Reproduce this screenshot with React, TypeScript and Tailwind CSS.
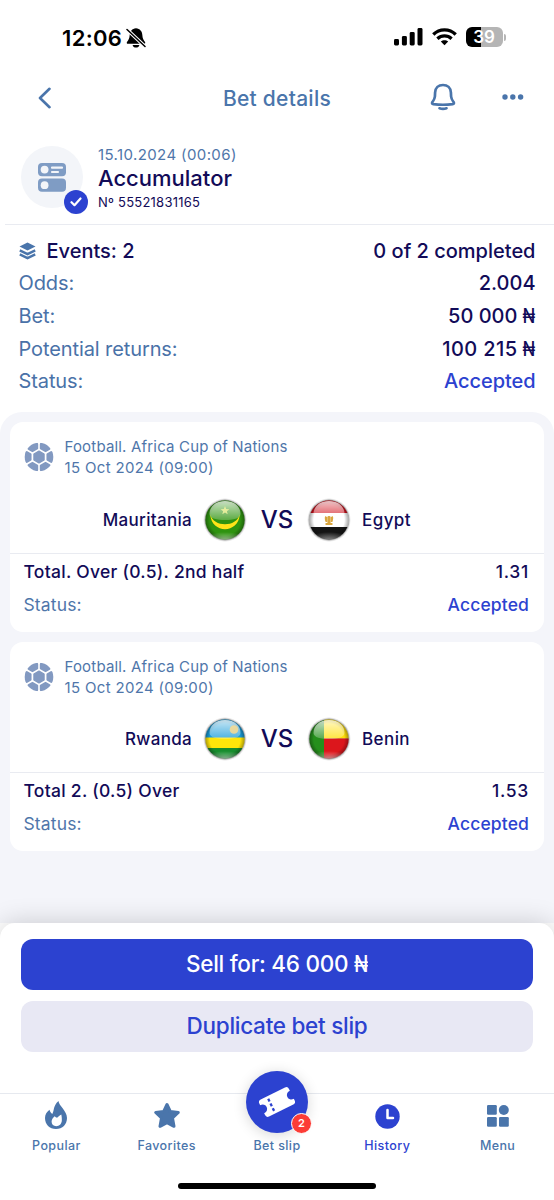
import React from 'react';

const NAVY = 'text-[#120b58]';

function Naira() {
  return <span className="-ml-[0.13em] inline-block origin-right scale-x-[0.83]">₦</span>;
}

function Row({ label, value, accent, money, wide }: { label: string; value: string; accent?: boolean; money?: boolean; wide?: boolean }) {
  return (
    <div className="flex h-[32.6px] items-center justify-between text-[20px] leading-none">
      <span className="tracking-[-0.005em] text-[#4a72a8]">{label}</span>
      <span className={accent ? 'font-medium tracking-[-0.003em] text-[#2c42d0]' : 'font-medium text-[#120b58]'}>
        <span className={wide ? 'tracking-[0.02em]' : ''}>{value}</span>
        {money && <> <Naira /></>}
      </span>
    </div>
  );
}

function Ball() {
  return (
    <svg width="30" height="30" viewBox="-15 -15 30 30" className="shrink-0">
      <circle r="14.3" fill="#8299c1" />
      <g stroke="#fff" strokeWidth="1.6">
        <path d="M0 -15V15M-13 -7.5L13 7.5M-13 7.5L13 -7.5" />
      </g>
      <path d="M0 -8.600L7.450 -4.300V4.300L0 8.600L-7.450 4.300V-4.300Z" fill="#fff" />
      <path d="M0 -5.9L5.1 -2.950V2.950L0 5.900L-5.100 2.950V-2.950Z" fill="#8299c1" stroke="#8299c1" strokeWidth="1.200" strokeLinejoin="round" />
      <g fill="#fff">
        <path d="M-2.200 -15H2.200L0 -12.600ZM-2.200 15H2.200L0 12.600Z" />
        <path d="M-14 -5.500L-11.900 -9L-11 -6.300ZM14 -5.500L11.900 -9L11 -6.300ZM-14 5.500L-11.900 9L-11 6.300ZM14 5.500L11.900 9L11 6.300Z" />
      </g>
    </svg>
  );
}

function Flag({ code }: { code: string }) {
  return (
    <svg width="44" height="44" viewBox="0 0 44 44" className="shrink-0">
      <defs>
        <clipPath id={`c-${code}`}>
          <circle cx="22" cy="22" r="19.6" />
        </clipPath>
        <radialGradient id={`e-${code}`} cx=".5" cy=".5" r=".5">
          <stop offset=".76" stopColor="#000" stopOpacity="0" />
          <stop offset="1" stopColor="#000" stopOpacity=".36" />
        </radialGradient>
        <linearGradient id={`g-${code}`} x1="0" y1="0" x2="0" y2="1">
          <stop offset="0" stopColor="#fff" stopOpacity=".75" />
          <stop offset="1" stopColor="#fff" stopOpacity=".22" />
        </linearGradient>
        <radialGradient id={`b-${code}`} cx=".5" cy="1" r=".6">
          <stop offset="0" stopColor="#fff" stopOpacity=".7" />
          <stop offset="1" stopColor="#fff" stopOpacity="0" />
        </radialGradient>
      </defs>
      <circle cx="22" cy="22" r="21.4" fill="#8a8a8a" opacity=".22" />
      <circle cx="22" cy="22" r="20.4" fill="#6f6f6f" opacity=".55" />
      <g clipPath={`url(#c-${code})`}>
        {code === 'mr' && <rect width="44" height="44" fill="#2f9310" />}
        {code === 'eg' && (
          <>
            <rect width="44" height="15" fill="#d0101c" />
            <rect y="15" width="44" height="14" fill="#fff" />
            <rect y="29" width="44" height="15" fill="#141414" />
          </>
        )}
        {code === 'rw' && (
          <>
            <rect width="44" height="21" fill="#189bd8" />
            <rect y="20.500" width="44" height="11" fill="#ffe60a" />
            <rect y="31" width="44" height="13" fill="#178d2e" />
          </>
        )}
        {code === 'bj' && (
          <>
            <rect width="17" height="44" fill="#258f1c" />
            <rect x="17" width="27" height="21.500" fill="#ffdf0a" />
            <rect x="17" y="21.500" width="27" height="23" fill="#dc161c" />
          </>
        )}
        <circle cx="22" cy="22" r="20" fill={`url(#e-${code})`} />
        <rect x="2" y="28" width="40" height="15" fill={`url(#b-${code})`} opacity=".8" />
        <path
          d="M22 3C32 3 37.500 9 37.500 16C37.500 20.500 30 22 22 22C14 22 6.500 20.500 6.500 16C6.500 9 12 3 22 3Z"
          fill={`url(#g-${code})`}
        />
        {code === 'mr' && (
          <>
            <path d="M7.300 16.500C8.500 36 35.500 36 36.700 16.500C33.500 29.500 10.500 29.500 7.300 16.500Z" fill="#ffe318" />
            <path d="M22 8L23.200 11L26.400 11.200L23.900 13.200L24.700 16.300L22 14.600L19.300 16.300L20.100 13.200L17.600 11.200L20.800 11Z" fill="#f2f3a0" opacity=".85" />
          </>
        )}
        {code === 'rw' && <circle cx="31" cy="12.500" r="4.300" fill="#f3d994" opacity=".9" />}
        {code === 'eg' && (
          <g fill="#d9a640">
            <path d="M18 18.500C19 18 20 19 20.300 20V24H18.600C17.800 22 17.600 20 18 18.500ZM26 18.500C25 18 24 19 23.700 20V24H25.400C26.200 22 26.400 20 26 18.500Z" />
            <rect x="20.400" y="18" width="3.200" height="8" rx="1.300" />
            <rect x="18.500" y="25" width="7" height="2" rx=".6" />
          </g>
        )}
      </g>
    </svg>
  );
}

type Bet = { home: string; away: string; h: string; a: string; market: string; odds: string };

function Card({ bet }: { bet: Bet }) {
  return (
    <div className="h-[209.600px] overflow-hidden rounded-[13px] bg-white">
      <div className="flex h-[70.500px] items-center gap-[11px] pl-[13.500px]">
        <Ball />
        <div className="text-[15px] leading-[21px] text-[#4f76aa]">
          <div className="tracking-[0.012em]">Football. Africa Cup of Nations</div>
          <div className="tracking-[0.022em]">15 Oct 2024 (09:00)</div>
        </div>
      </div>
      <div className={`grid h-[60px] grid-cols-[182px_11px_44px_60px_44px_11px_1fr] items-center pb-[6px] text-[17px] leading-none font-medium ${NAVY}`}>
        <span className="pt-px text-right tracking-[0.018em]">{bet.home}</span>
        <span />
        <Flag code={bet.h} />
        <span className="text-center text-[24px] font-medium">VS</span>
        <Flag code={bet.a} />
        <span />
        <span className="pt-px tracking-[0.025em]">{bet.away}</span>
      </div>
      <div className="h-px bg-[#e9ebf1]" />
      <div className={`flex h-[36px] items-center justify-between pr-[15px] pl-[13.500px] text-[17.500px] leading-none font-medium ${NAVY}`}>
        <span className="tracking-[0.016em]">{bet.market}</span>
        <span className="tracking-[0.04em]">{bet.odds}</span>
      </div>
      <div className="flex h-[30px] items-center justify-between pr-[15px] pl-[13.500px] text-[17.500px] leading-none">
        <span className="tracking-[0.008em] text-[#4f76aa]">Status:</span>
        <span className="font-medium tracking-[0.007em] text-[#2c42d0]">Accepted</span>
      </div>
    </div>
  );
}

function Tab({ label, active, children }: { label: string; active?: boolean; children?: React.ReactNode }) {
  return (
    <div className={`flex w-[110.300px] flex-col items-center ${active ? 'text-[#2c42d0]' : 'text-[#4a75ab]'}`}>
      <div className="flex h-[42px] items-center justify-center">{children}</div>
      <span className="pt-px text-[12.500px] leading-[18px] font-medium tracking-[0.032em]">{label}</span>
    </div>
  );
}

const bets: Bet[] = [
  { home: 'Mauritania', away: 'Egypt', h: 'mr', a: 'eg', market: 'Total. Over (0.5). 2nd half', odds: '1.31' },
  { home: 'Rwanda', away: 'Benin', h: 'rw', a: 'bj', market: 'Total 2. (0.5) Over', odds: '1.53' },
];

export default function App() {
  return (
    <div className="flex h-[1200px] w-[554px] flex-col overflow-hidden bg-white font-['Inter',sans-serif]">
      <div className="flex h-[75px] shrink-0 items-center justify-between pr-[48.500px] pl-[62px] text-black">
        <div className="flex items-center gap-[4px]">
          <span className="text-[22px] leading-none font-semibold tracking-[0.015em]">12:06</span>
          <svg width="20" height="20" viewBox="0 0 20 20">
            <path d="M10 .3C6 .8 3.900 3.300 3.700 6.800C3.500 10.500 2.500 12 1 13.900C.4 14.900 .8 15.800 1.900 15.800H18.100C19.200 15.800 19.600 14.900 19 13.900C17.500 12 16.500 10.500 16.300 6.800C16.100 3.300 14 .8 10 .3ZM6.600 16.900C7 18.700 8.300 19.600 10 19.600S13 18.700 13.400 16.900Z" fill="#000" />
            <path d="M1 1.500L19 18.500" stroke="#fff" strokeWidth="3.600" />
            <path d="M1 1.500L19 18.500" stroke="#000" strokeWidth="1.500" strokeLinecap="round" />
          </svg>
        </div>
        <div className="flex items-center pb-px">
          <svg width="29" height="18" viewBox="0 0 29 18">
            <rect x="0" y="11" width="5" height="6.500" rx="1.400" />
            <rect x="7.900" y="8" width="5" height="9.500" rx="1.400" />
            <rect x="15.700" y="4" width="5" height="13.500" rx="1.400" />
            <rect x="23.500" y="0" width="5" height="17.500" rx="1.400" />
          </svg>
          <svg width="25" height="18" viewBox="0 0 25 18" className="ml-[8.500px]" fill="none" stroke="#000" strokeWidth="3.300">
            <path d="M1.300 6.500C7.500 .3 17.500 .3 23.700 6.500" />
            <path d="M5.400 10.800C9.500 7 15.500 7 19.600 10.800" />
            <path d="M12.500 17.200L8.800 13.500C10.900 11.700 14.100 11.700 16.200 13.500Z" fill="#000" stroke="none" />
          </svg>
          <div className="ml-[9px] flex h-[20px] w-[37px] items-center justify-center rounded-[6px] bg-[linear-gradient(90deg,#000_40%,#b5b5b5_40%)] pt-[1px] text-[17px] leading-none font-semibold text-white">
            39
          </div>
          <div className="ml-[1px] h-[7px] w-[2px] rounded-r-full bg-[#b5b5b5]" />
        </div>
      </div>

      <div className="grid h-[45px] shrink-0 grid-cols-[184px_186px_1fr] items-center text-[#4a75ab]">
        <svg width="14" height="22" viewBox="0 0 14 22" fill="none" className="ml-[38px]">
          <path d="M11.500 1.800L2 11L11.500 20.200" stroke="#4a75ab" strokeWidth="2.600" strokeLinecap="round" strokeLinejoin="round" />
        </svg>
        <span className="pt-px text-center text-[21px] leading-none font-medium tracking-[0.012em]">Bet details</span>
        <div className="flex items-center pb-px pl-[60px]">
          <svg width="26" height="28" viewBox="0 0 26 28" fill="none" stroke="#4a75ab" strokeWidth="2.700" strokeLinecap="round" strokeLinejoin="round">
            <path d="M13 2C8.500 2 5.300 5 5.100 9.500L4.900 13.500C4.700 16 3.700 17.200 2.300 19.200C1.700 20.300 2.200 21 3.300 21.100C9.500 21.900 16.500 21.900 22.700 21.100C23.800 21 24.300 20.300 23.700 19.200C22.300 17.200 21.300 16 21.100 13.500L20.900 9.500C20.700 5 17.500 2 13 2Z" />
            <path d="M9.500 25.300C11.500 26 14.500 26 16.500 25.300" />
          </svg>
          <svg width="22" height="6" viewBox="0 0 22 6" fill="#4a75ab" className="-mt-px ml-[46px]">
            <circle cx="3" cy="3" r="2.700" />
            <circle cx="10.800" cy="3" r="2.700" />
            <circle cx="18.600" cy="3" r="2.700" />
          </svg>
        </div>
      </div>

      <div className="ml-[5px] flex h-[105px] shrink-0 border-b border-[#e9ebf1] pt-[24px] pl-[16px]">
        <div className="relative mt-[2px] flex h-[62px] w-[62px] items-center justify-center rounded-full bg-[#f3f5f9] pt-[1px]">
          <svg width="28" height="29" viewBox="0 0 28 29">
            <rect x="0" y="0" width="28" height="13.200" rx="4" fill="#7f9cc4" />
            <rect x="0" y="15.600" width="28" height="13.200" rx="4" fill="#7f9cc4" />
            <circle cx="6.600" cy="6.600" r="3.900" fill="#f3f5f9" />
            <circle cx="6.600" cy="22.200" r="3.900" fill="#f3f5f9" />
            <path d="M14 4.700H24M14 9H20" stroke="#f3f5f9" strokeWidth="2.200" strokeLinecap="round" />
          </svg>
          <div className="absolute top-[44px] left-[43px] flex h-[24px] w-[24px] items-center justify-center rounded-full bg-[#2c42d0]">
            <svg width="12" height="10" viewBox="0 0 12 10" fill="none">
              <path d="M1.500 5.200L4.500 8.200L10.500 1.500" stroke="#fff" strokeWidth="2.200" strokeLinecap="round" strokeLinejoin="round" />
            </svg>
          </div>
        </div>
        <div className={`flex flex-col pl-[15px] ${NAVY}`}>
          <div className="flex h-[21px] items-center text-[15px] leading-none tracking-[0.026em] text-[#4f76aa]">15.10.2024 (00:06)</div>
          <div className="flex h-[25px] items-center text-[22px] leading-none font-medium">Accumulator</div>
          <div className="flex h-[25px] items-center text-[13px] leading-none tracking-[0.018em]">Nº 55521831165</div>
        </div>
      </div>

      <div className="h-[186.500px] shrink-0 px-[18.500px] pt-[9.500px]">
        <div className={`flex h-[32.600px] items-center justify-between text-[20px] leading-none font-medium ${NAVY}`}>
          <div className="flex items-center gap-[11px]">
            <svg width="17" height="18" viewBox="0 0 17 18">
              <path d="M8.500 .5L16.500 4.500L8.500 8.500L.5 4.500Z" fill="#4a75ab" />
              <path d="M.8 8.300L8.500 12.100L16.200 8.300M.8 12.400L8.500 16.200L16.200 12.400" fill="none" stroke="#4a75ab" strokeWidth="2.500" />
            </svg>
            <span>Events: 2</span>
          </div>
          <span>0 of 2 completed</span>
        </div>
        <Row label="Odds:" value="2.004" />
        <Row label="Bet:" value="50 000" money />
        <Row label="Potential returns:" value="100 215" money wide />
        <Row label="Status:" value="Accepted" accent />
      </div>

      <div className="flex flex-1 flex-col gap-[10px] rounded-t-[22px] bg-[#f4f5fa] px-[10px] pt-[10.500px]">
        {bets.map((b) => (
          <Card key={b.home} bet={b} />
        ))}
      </div>

      <div className="relative flex h-[277px] shrink-0 flex-col rounded-t-[15px] bg-white shadow-[0_0_26px_rgba(0,0,0,0.18)]">
        <div className="flex h-[170px] flex-col gap-[10.500px] px-[21px] pt-[15.500px] text-[22.500px] leading-none tracking-[-0.012em]">
          <div className="flex h-[51.500px] items-center justify-center rounded-[12px] bg-[#2c42d0] font-medium text-white">
            <span>
              Sell for: 46 000 <Naira />
            </span>
          </div>
          <div className="flex h-[51.500px] items-center justify-center rounded-[12px] bg-[#e8e8f4] font-medium text-[#2c42d0]">Duplicate bet slip</div>
        </div>
        <div className="flex h-[88px] justify-center border-t border-[#e6e9ef]">
          <Tab label="Popular">
            <svg width="22" height="28" viewBox="0 0 22 28">
              <path d="M13.500 0C13.800 5 22 9.500 22 17C22 23.500 17.500 28 11 28S0 23.500 0 17C0 13.500 1.800 10.800 4.500 8.800C5 10.500 5.600 12 7.300 12.900C9.500 9.500 7.800 5 13.500 0ZM16.300 13.500C14.500 14.300 13.500 15.600 12.400 16.600C11.400 16.900 10.500 15.800 9.700 15.200C7.800 16.800 6.600 18.500 6.600 20.800C6.600 23.500 8.500 25.200 11.200 25.200C14.400 25.200 16.400 23 16.800 20C17 17.800 16.700 15.500 16.300 13.500Z" fill="#4a75ab" fillRule="evenodd" />
            </svg>
          </Tab>
          <Tab label="Favorites">
            <svg width="28" height="27" viewBox="0 0 28 27">
              <path d="M14 2.500L17.300 9.500L25.300 10.500L19.500 16L21 24.300L14 20.600L7 24.300L8.500 16L2.700 10.500L10.700 9.500Z" fill="#4a75ab" stroke="#4a75ab" strokeWidth="3" strokeLinejoin="round" />
            </svg>
          </Tab>
          <Tab label="Bet slip">
            <div className="relative -mt-[27px] flex h-[62px] w-[62px] shrink-0 items-center justify-center rounded-full bg-[#2c42d0] shadow-[0_2px_14px_rgba(0,0,0,0.16)]">
              <svg width="38" height="32" viewBox="-19 -16 38 32">
                <g transform="rotate(-26)">
                  <path d="M-13.500 -9.500H13.500Q16.500 -9.500 16.500 -6.500V-4.500H16A4.500 4.500 0 0 0 16 4.500H16.500V6.500Q16.500 9.500 13.500 9.500H-13.500Q-16.500 9.500 -16.500 6.500V4.500H-16A4.500 4.500 0 0 0 -16 -4.500H-16.500V-6.500Q-16.500 -9.500 -13.500 -9.500Z" fill="#fff" />
                  <path d="M-6.500 -6.700V7" stroke="#2c42d0" strokeWidth="2.300" strokeDasharray="3 2.200" />
                </g>
              </svg>
              <div className="absolute top-[42px] left-[45px] flex h-[21px] w-[21px] items-center justify-center rounded-full border-[1.500px] border-white bg-[#fc3c36] text-[11px] leading-none font-semibold text-white">
                2
              </div>
            </div>
          </Tab>
          <Tab label="History" active>
            <svg width="25" height="25" viewBox="0 0 25 25" className="translate-y-px">
              <circle cx="12.500" cy="12.500" r="12.200" fill="#2c42d0" />
              <path d="M12.500 6V14H18" fill="none" stroke="#fff" strokeWidth="2.500" strokeLinecap="round" strokeLinejoin="round" />
            </svg>
          </Tab>
          <Tab label="Menu">
            <svg width="22" height="22" viewBox="0 0 22 22" className="translate-y-px" fill="#4a75ab">
              <rect x="0" y="0" width="9.800" height="9.800" rx="1.200" />
              <circle cx="16.800" cy="5" r="5" />
              <rect x="0" y="12" width="9.800" height="9.800" rx="1.200" />
              <rect x="12" y="12" width="9.800" height="9.800" rx="1.200" />
            </svg>
          </Tab>
        </div>
        <div className="mx-auto mt-[1.500px] h-[6.500px] w-[198px] rounded-full bg-black" />
      </div>
    </div>
  );
}
